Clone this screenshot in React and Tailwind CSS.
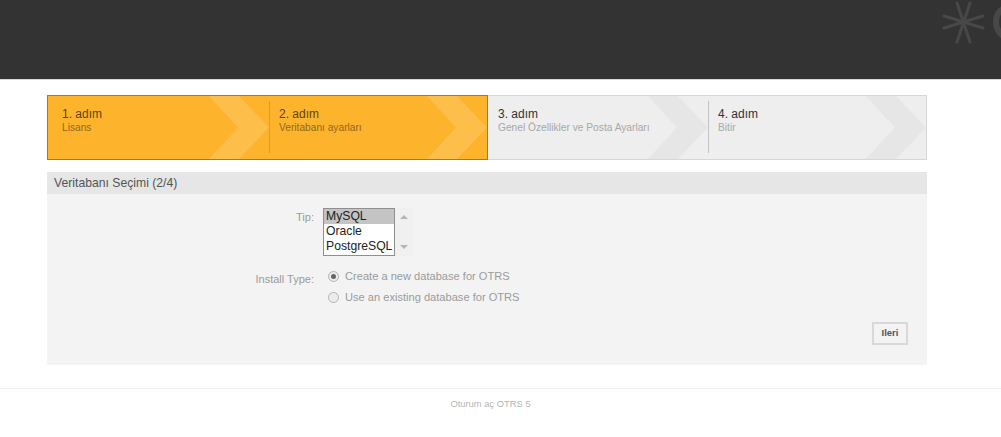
const SANS = "font-['Liberation_Sans',Arial,sans-serif]";

function Chevron({ fill }) {
  return (
    <svg className="absolute right-0 top-0 h-[63px] w-[60px]" viewBox="0 0 60 63" aria-hidden="true">
      <polygon points="0,0 30,0 60,31.5 30,63 0,63 29,31.5" fill={fill} />
    </svg>
  );
}

function Step({ n, sub, active, divider, width, pad }) {
  return (
    <div className={`relative h-full ${width}`}>
      <Chevron fill={active ? "#fdbe4a" : "#e6e6e6"} />
      <div className={`relative mt-[5px] flex h-[52px] flex-col pt-[6px] ${pad} ${divider ? "border-l" : ""} ${active ? "border-[#dd9c2c]" : "border-[#c4c4c4]"}`}>
        <span className={`text-[12px] leading-[15px] ${active ? "text-[#5c4413]" : "text-[#333333]"}`}>{n}. adım</span>
        <span className={`text-[10.2px] leading-[12px] ${active ? "text-[#94661a]" : "text-[#a8a8a8]"}`}>{sub}</span>
      </div>
    </div>
  );
}

function Logo() {
  return (
    <svg className="absolute right-0 top-0 h-[50px] w-[60px] blur-[0.4px]" viewBox="0 0 60 50" aria-hidden="true">
      <g stroke="#484848" strokeWidth="3" strokeLinecap="round" fill="none">
        <path d="M16 3 L29 42" />
        <path d="M29 3 L16 42" />
        <path d="M3 28 L42 16" />
        <path d="M3 16 L42 28" />
      </g>
      <path d="M62 9 C57 11 55 17 55 22 C55 28 57 32 62 36" stroke="#484848" strokeWidth="6" fill="none" />
    </svg>
  );
}

function Radio({ checked }) {
  return (
    <span className="flex h-[11px] w-[11px] items-center justify-center rounded-full border border-[#b4b4b4] bg-[#ececec]">
      {checked && <span className="h-[5px] w-[5px] rounded-full bg-[#666666]" />}
    </span>
  );
}

export default function App() {
  return (
    <div className={`h-[437px] w-[1001px] overflow-hidden bg-white ${SANS}`}>
      <header className="relative h-[80px] border-b border-[#d8d8d8] bg-[#333333]">
        <Logo />
      </header>

      <main className="mx-[47px] mt-[15px] w-[880px]">
        <div className="flex h-[65px] border border-[#d6d6d6] bg-[#eeeeee]">
          <div className="-my-px -ml-px flex h-[65px] w-[441px] border border-[#a9782f] bg-[#fdb42c]">
            <Step n="1" sub="Lisans" active width="w-[221px]" pad="pl-[14px]" />
            <Step n="2" sub="Veritabanı ayarları" active divider width="w-[218px]" pad="pl-[9px]" />
          </div>
          <Step n="3" sub="Genel Özellikler ve Posta Ayarları" width="w-[220px]" pad="pl-[10px]" />
          <Step n="4" sub="Bitir" divider width="w-[218px]" pad="pl-[9px]" />
        </div>

        <section className="mt-[12px] h-[193px] bg-[#f3f3f3]">
          <h2 className="flex h-[22px] items-center bg-[#e6e6e6] px-[7px] text-[12.2px] font-normal text-[#555555]">
            Veritabanı Seçimi (2/4)
          </h2>

          <div className="mt-[14px] flex">
            <div className="w-[267px] pt-[3px] text-right text-[11px] leading-[13px] text-[#9b9b9b]">Tip:</div>
            <div className="ml-[9px] flex h-[48px]">
              <div className="w-[72px] border border-[#8f8f8f] bg-white text-[12.2px] leading-[15px] text-[#222222]">
                <div className="bg-[#c4c4c4] pl-[2px]">MySQL</div>
                <div className="pl-[2px]">Oracle</div>
                <div className="pl-[2px]">PostgreSQL</div>
              </div>
              <div className="flex w-[18px] flex-col items-center justify-between bg-[#f0f0f0] py-[7px]">
                <span className="h-0 w-0 border-x-[4px] border-b-[4px] border-x-transparent border-b-[#b5b5b5]" />
                <span className="h-0 w-0 border-x-[4px] border-t-[4px] border-x-transparent border-t-[#b5b5b5]" />
              </div>
            </div>
          </div>

          <div className="mt-[13px] flex">
            <div className="w-[267px] pt-[4px] text-right text-[11px] leading-[13px] text-[#9b9b9b]">Install Type:</div>
            <div className="ml-[14px] flex flex-col gap-[8px] pt-[1px] text-[11.1px] leading-[13px] text-[#9b9b9b]">
              <label className="flex items-center gap-[6px]"><Radio checked />Create a new database for OTRS</label>
              <label className="flex items-center gap-[6px]"><Radio />Use an existing database for OTRS</label>
            </div>
          </div>

          <div className="mt-[18px] flex justify-end pr-[19px]">
            <button className="flex h-[23px] w-[36px] items-center justify-center border-2 border-[#d8d8d8] bg-[#f3f3f3] text-[9.5px] font-bold text-[#555555]">
              Ileri
            </button>
          </div>
        </section>
      </main>

      <footer className="mt-[23px] border-t border-[#f0f0f0] pr-[20px] pt-[9px] text-center text-[9.4px] leading-[12px] text-[#b5b5b5]">
        Oturum aç OTRS 5
      </footer>
    </div>
  );
}
